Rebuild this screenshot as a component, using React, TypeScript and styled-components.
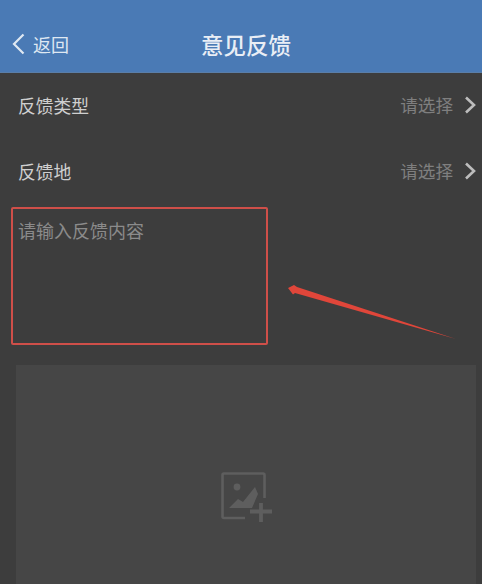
import styled, { createGlobalStyle } from "styled-components";

const GlobalStyle = createGlobalStyle`
  html, body {
    margin: 0;
    padding: 0;
    background: #3d3d3d;
  }
  body {
    font-family: "Noto Sans CJK SC", "Liberation Sans", sans-serif;
  }
`;

const SPage = styled.div`
  position: relative;
  width: 482px;
  height: 584px;
  overflow: hidden;
  background: #3d3d3d;
`;

const SHeader = styled.header`
  height: 73px;
  display: grid;
  grid-template-columns: 1fr auto 1fr;
  align-items: center;
  padding: 16px 12px 0;
  box-sizing: border-box;
  background: #4a7ab5;
  border-bottom: 1px solid #5a7ea8;
`;

const SBack = styled.div`
  display: flex;
  align-items: center;
  gap: 8px;
  font-size: 18px;
  line-height: 26px;
  color: #dfe8f2;
`;

const STitle = styled.h1`
  margin: 0 0 0 10px;
  font-size: 22.5px;
  line-height: 30px;
  font-weight: 500;
  color: #e9eef5;
`;

const SRow = styled.div`
  height: 66px;
  display: flex;
  align-items: center;
  justify-content: space-between;
  padding: 0 6px 3px 18px;
  box-sizing: border-box;
`;

const SLabel = styled.span`
  font-size: 17.8px;
  color: #cfcfcf;
`;

const SValue = styled.span`
  display: flex;
  align-items: center;
  gap: 11px;
  font-size: 17.6px;
  color: #7f7f7f;
`;

const SInputBox = styled.div`
  width: 257px;
  height: 138px;
  margin: 2px 0 0 11px;
  padding: 8px 5px;
  box-sizing: border-box;
  border: 2px solid #cf4f49;
  border-radius: 2px;
  font-size: 18px;
  line-height: 26px;
  color: #8b8b8b;
`;

const SUpload = styled.div`
  height: 219px;
  margin: 20px 6px 0 16px;
  display: flex;
  justify-content: center;
  padding: 107px 0 0 2px;
  box-sizing: border-box;
  background: #464646;
`;

const SArrow = styled.svg`
  position: absolute;
  left: 280px;
  top: 278px;
`;

const Chevron = () => (
  <svg width="12" height="18" viewBox="0 0 12 18" fill="none">
    <path d="M2 1.5 L10 9 L2 16.5" stroke="#bdbdbd" strokeWidth="2.6" />
  </svg>
);

const App = () => {
  return (
    <SPage>
      <GlobalStyle />
      <SHeader>
        <SBack>
          <svg width="13" height="22" viewBox="0 0 13 22" fill="none">
            <path d="M11.5 1.5 L2 11 L11.5 20.5" stroke="#dfe8f2" strokeWidth="2.2" />
          </svg>
          返回
        </SBack>
        <STitle>意见反馈</STitle>
        <span />
      </SHeader>
      <SRow>
        <SLabel>反馈类型</SLabel>
        <SValue>
          请选择
          <Chevron />
        </SValue>
      </SRow>
      <SRow>
        <SLabel>反馈地</SLabel>
        <SValue>
          请选择
          <Chevron />
        </SValue>
      </SRow>
      <SInputBox>请输入反馈内容</SInputBox>
      <SUpload>
        <svg width="52" height="52" viewBox="0 0 52 52" fill="none">
          <path
            d="M24 46 H3 Q1.5 46 1.5 44.5 V3 Q1.5 1.5 3 1.5 H42 Q43.5 1.5 43.5 3 V26"
            stroke="#5e5e5e"
            strokeWidth="2.6"
          />
          <circle cx="16" cy="15" r="3.4" fill="#5e5e5e" />
          <path d="M8 36 L17 27 L22 30 L34 15 L37 22 L31 36 Z" fill="#5e5e5e" />
          <path d="M29 39.5 H51 M40 31 V50" stroke="#5e5e5e" strokeWidth="3.8" />
        </svg>
      </SUpload>
      <SArrow width="180" height="66" viewBox="0 0 180 66">
        <path d="M8 10 L14 7 L17 9 L176 61 L15 15 L13 16.5 Z" fill="#e0463a" />
      </SArrow>
    </SPage>
  );
};

export default App;
